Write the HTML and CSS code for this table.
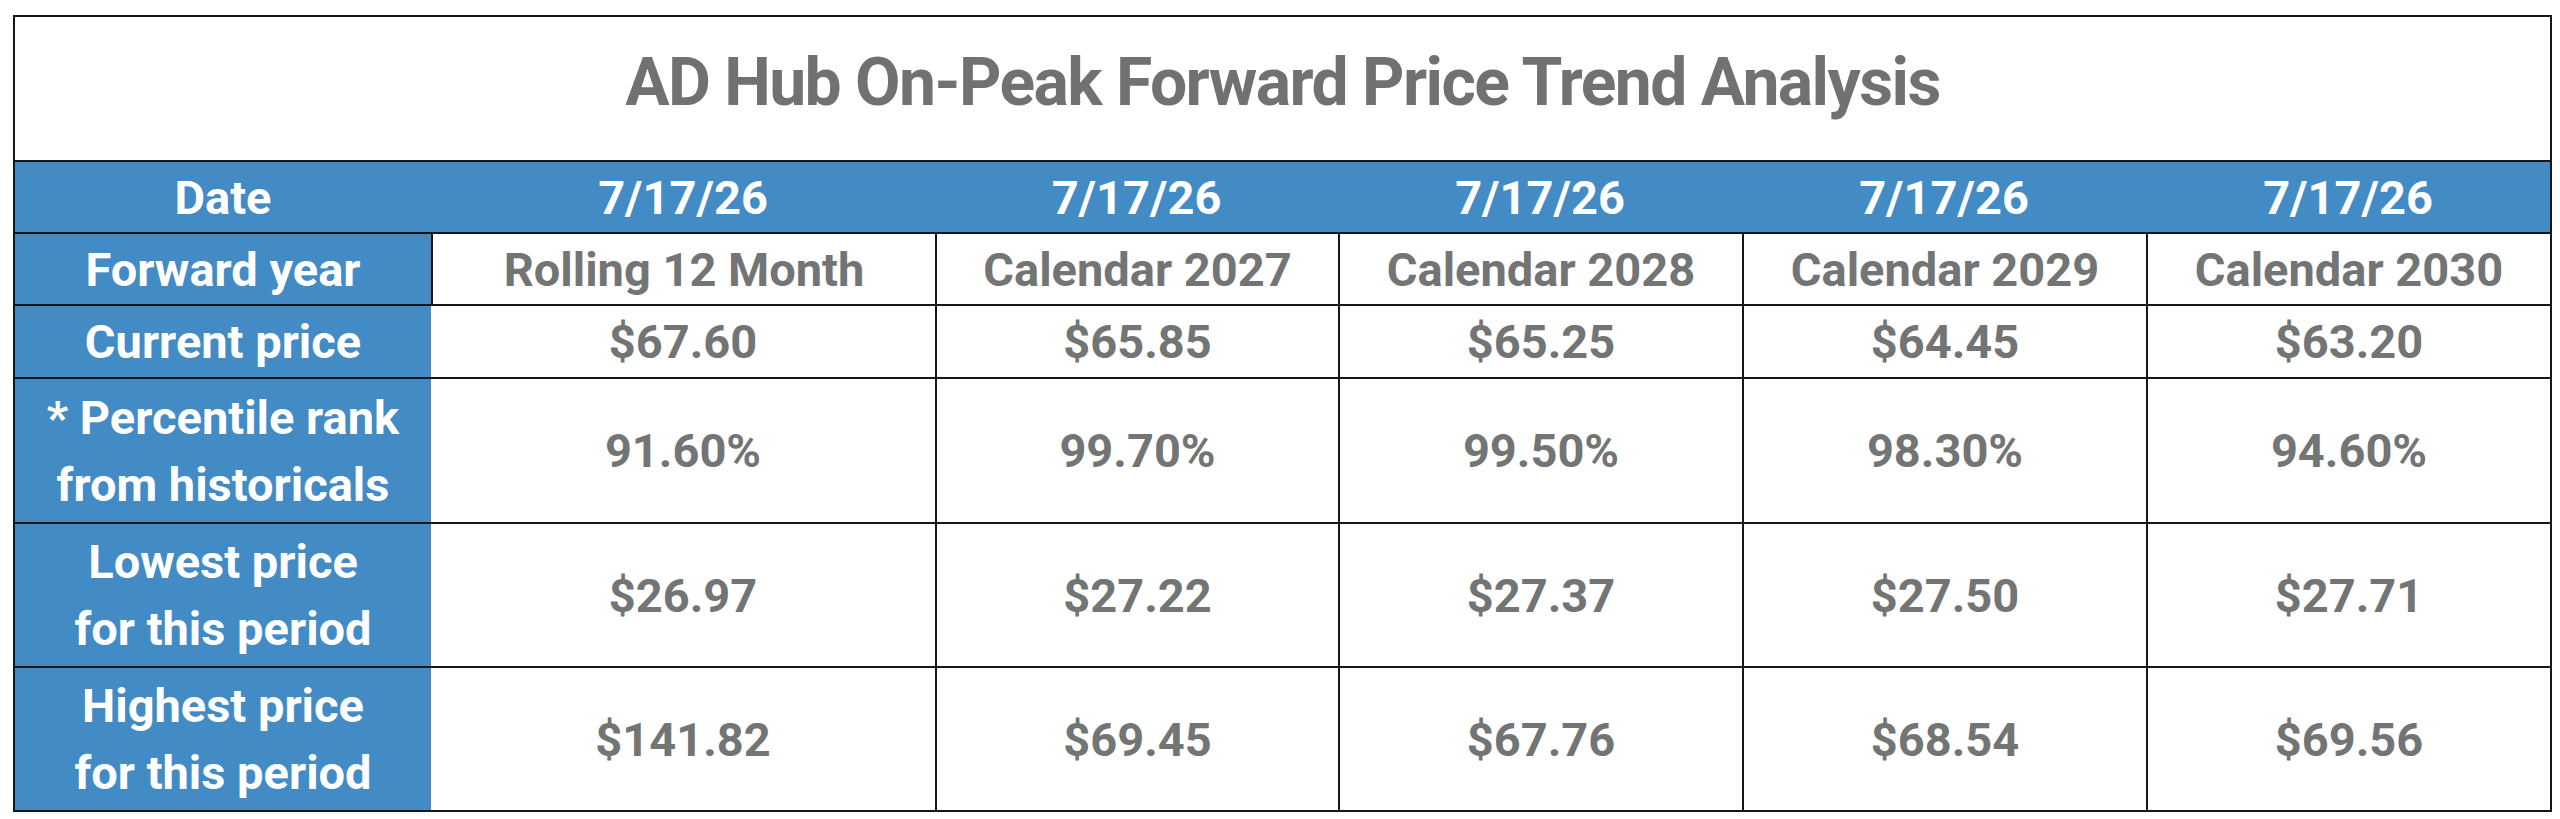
FILE: index.html
```html
<!DOCTYPE html>
<html lang="en">
<head>
<meta charset="utf-8">
<title>AD Hub On-Peak Forward Price Trend Analysis</title>
<link rel="stylesheet" href="styles.css">
</head>
<body>
<div class="sheet">
  <div class="title">AD Hub On-Peak Forward Price Trend Analysis</div>

  <div class="cell head">Date</div>
  <div class="cell head">7/17/26</div>
  <div class="cell head">7/17/26</div>
  <div class="cell head">7/17/26</div>
  <div class="cell head">7/17/26</div>
  <div class="cell head">7/17/26</div>

  <div class="cell label">Forward year</div>
  <div class="cell data ruled">Rolling 12 Month</div>
  <div class="cell data ruled">Calendar 2027</div>
  <div class="cell data ruled">Calendar 2028</div>
  <div class="cell data ruled">Calendar 2029</div>
  <div class="cell data ruled">Calendar 2030</div>

  <div class="cell label">Current price</div>
  <div class="cell data">$67.60</div>
  <div class="cell data ruled">$65.85</div>
  <div class="cell data ruled">$65.25</div>
  <div class="cell data ruled">$64.45</div>
  <div class="cell data ruled">$63.20</div>

  <div class="cell label">* Percentile rank<br>from historicals</div>
  <div class="cell data">91.60%</div>
  <div class="cell data ruled">99.70%</div>
  <div class="cell data ruled">99.50%</div>
  <div class="cell data ruled">98.30%</div>
  <div class="cell data ruled">94.60%</div>

  <div class="cell label">Lowest price<br>for this period</div>
  <div class="cell data">$26.97</div>
  <div class="cell data ruled">$27.22</div>
  <div class="cell data ruled">$27.37</div>
  <div class="cell data ruled">$27.50</div>
  <div class="cell data ruled">$27.71</div>

  <div class="cell label">Highest price<br>for this period</div>
  <div class="cell data">$141.82</div>
  <div class="cell data ruled">$69.45</div>
  <div class="cell data ruled">$67.76</div>
  <div class="cell data ruled">$68.54</div>
  <div class="cell data ruled">$69.56</div>
</div>
</body>
</html>
```

FILE: styles.css
```css
html, body {
  margin: 0;
  padding: 0;
  background: #ffffff;
}

body {
  padding: 15px 0 0 13px;
  font-family: "Roboto", "Liberation Sans", Arial, sans-serif;
  font-weight: 700;
}

.sheet {
  display: grid;
  grid-template-columns: 416px 504px 403px 404px 404px 404px;
  grid-template-rows: 143px 72px 72px 73px 145px 144px 144px;
  width: max-content;
  border: 2px solid #161616;
  background: #ffffff;
}

.title {
  grid-column: 1 / -1;
  display: flex;
  align-items: center;
  justify-content: center;
  padding-bottom: 12px;
  box-sizing: border-box;
  font-size: 66px;
  letter-spacing: -1.55px;
  color: #707271;
}

.cell {
  box-sizing: border-box;
  display: flex;
  align-items: center;
  justify-content: center;
  text-align: center;
  border-top: 2px solid #161616;
  font-size: 47px;
  line-height: 67px;
}

.head {
  background: #428bc5;
  color: #ffffff;
}

.label {
  background: #428bc5;
  color: #ffffff;
}

.data {
  background: #ffffff;
  color: #737474;
}

.ruled {
  border-left: 2px solid #161616;
}
```
